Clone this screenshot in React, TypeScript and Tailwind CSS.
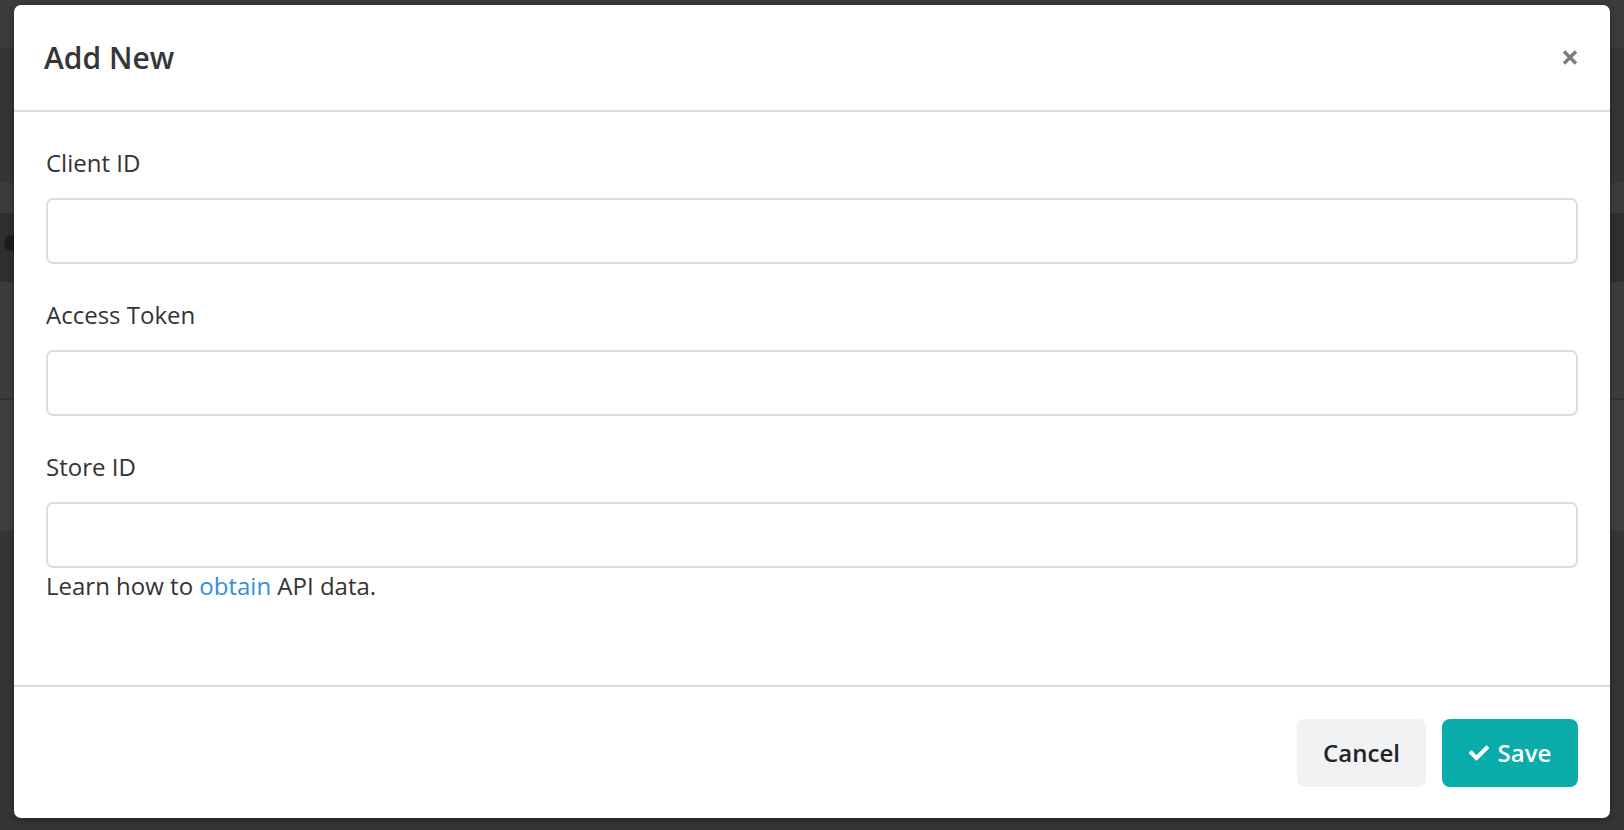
import React from "react";
import { FaCheck } from "react-icons/fa";

function CloseIcon() {
  return (
    <svg width="16" height="15" viewBox="0 0 16 15" aria-hidden="true">
      <path d="M2 1.5 L14 13.5 M14 1.5 L2 13.5" stroke="#7b7b7b" strokeWidth="3.4" strokeLinecap="butt" />
    </svg>
  );
}

function Field({ label, last }: { label: string; last?: boolean }) {
  return (
    <div className={last ? "flex flex-col" : "flex flex-col mb-[33px]"}>
      <label className="text-[24px] leading-[36px] text-[#333333]">{label}</label>
      <input
        type="text"
        className="mt-[17px] h-[66px] w-full rounded-[7px] border-2 border-[#d9dde1] bg-white px-4 outline-none"
      />
    </div>
  );
}

export default function App() {
  return (
    <div
      className="relative w-[1624px] h-[830px] overflow-hidden bg-[#343537]"
      style={{ fontFamily: '"Open Sans", "Noto Sans", sans-serif' }}
    >
      {/* dimmed page underneath */}
      <div className="flex flex-col">
        <div className="h-[48px] bg-[#3b3b3c]" />
        <div className="h-[135px] bg-[#343537]" />
        <div className="h-[30px] bg-[#3c3c3d]" />
        <div className="relative h-[69px] bg-[#2d2f31]">
          <div className="absolute left-[4px] top-[22px] h-[16px] w-[16px] rounded-full bg-[#1c1d1e]" />
        </div>
        <div className="h-[116px] bg-[#3c3c3d]" />
        <div className="h-[2px] bg-[#313233]" />
        <div className="h-[131px] bg-[#3e3e3f]" />
        <div className="flex-1 bg-[#343537]" />
      </div>

      {/* modal */}
      <div className="absolute left-[14px] top-[5px] flex h-[813px] w-[1596px] flex-col rounded-[7px] bg-white shadow-[0_2px_6px_rgba(0,0,0,0.35)]">
        <div className="flex h-[107px] items-center justify-between border-b-2 border-[#d8dcdf] pl-[30px] pr-[32px]">
          <h2 className="text-[30px] font-semibold leading-[40px] text-[#363636]">Add New</h2>
          <button className="flex h-[16px] w-[16px] items-center justify-center">
            <CloseIcon />
          </button>
        </div>

        <div className="flex-1 px-[32px] pt-[33px]">
          <Field label="Client ID" />
          <Field label="Access Token" />
          <Field label="Store ID" last />
          <p className="text-[24px] leading-[36px] text-[#333333]">
            Learn how to <a className="text-[#2f8fe3]">obtain</a> API data.
          </p>
        </div>

        <div className="flex justify-end gap-[16px] border-t-2 border-[#d8dcdf] pb-[31px] pr-[32px] pt-[32px]">
          <button className="flex h-[68px] w-[129px] items-center justify-center rounded-[8px] bg-[#f1f2f4] text-[24px] font-semibold text-[#222326]">
            Cancel
          </button>
          <button className="flex h-[68px] w-[136px] items-center justify-center gap-[9px] rounded-[8px] bg-[#0aabab] text-[24px] font-semibold text-white">
            <FaCheck size={20} color="#ffffff" />
            Save
          </button>
        </div>
      </div>
    </div>
  );
}
